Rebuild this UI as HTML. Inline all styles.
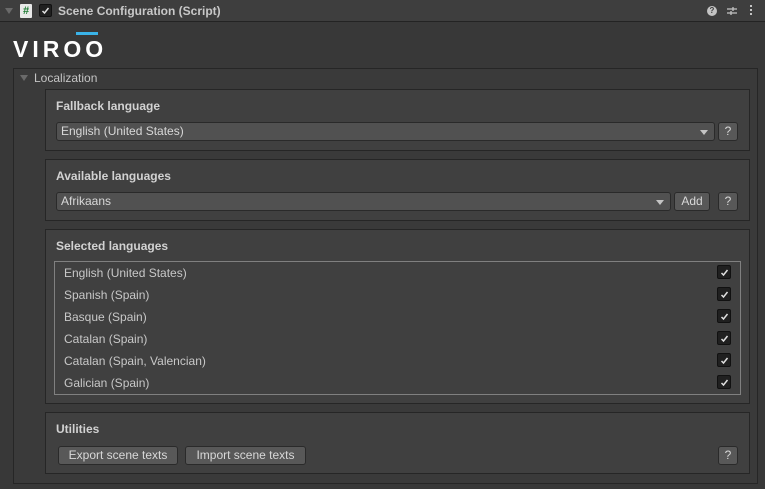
<!DOCTYPE html><html><head><style>
*{box-sizing:border-box;margin:0;padding:0}
body{width:765px;height:489px;background:#383838;font-family:"Liberation Sans",sans-serif;font-size:12px;color:#c4c4c4;position:relative;overflow:hidden}
.a{position:absolute}
.box{position:absolute;left:45px;width:705px;background:#404040;border:1px solid #262626}
.t{position:absolute;left:10px;font-weight:bold;font-size:12px;color:#d2d2d2}
.dd{position:absolute;background:#515151;border:1px solid #2a2a2a;border-radius:3px;height:19px;padding-left:4px;line-height:17px;color:#d8d8d8}
.dd:after{content:"";position:absolute;right:6px;top:7px;border-left:4px solid transparent;border-right:4px solid transparent;border-top:5px solid #c4c4c4}
.btn{position:absolute;background:#585858;border:1px solid #2a2a2a;border-radius:3px;height:19px;line-height:17px;text-align:center;color:#d8d8d8}
.row{position:absolute;left:9px;color:#c8c8c8}
.cb{position:absolute;left:662px;width:14px;height:14px;background:#202020;border:1px solid #111;border-radius:2px}
.cb svg{position:absolute;left:1px;top:1px}
</style></head><body>
<div class="a" style="left:0;top:0;width:765px;height:22px;background:#3e3e3e;border-bottom:1px solid #232323"></div>
<div class="a" style="left:5px;top:8px;border-left:4px solid transparent;border-right:4px solid transparent;border-top:6px solid #6a6a6a"></div>
<div class="a" style="left:20px;top:4px;width:12px;height:14px;background:#e8e8e8;border-radius:1px;color:#1b7a30;font-weight:bold;font-size:11px;text-align:center;line-height:14px">#</div>
<div class="a" style="left:39px;top:4px;width:13px;height:13px;background:#202020;border:1px solid #111;border-radius:2px"><svg width="11" height="11" style="position:absolute;left:0;top:0"><path d="M2.5 6 L4.5 8 L8.5 3" stroke="#e0e0e0" stroke-width="1.5" fill="none"/></svg></div>
<div class="a" style="left:58px;top:4px;font-weight:bold;color:#c8c8c8">Scene Configuration (Script)</div>
<div class="a" style="left:707px;top:6px;width:10px;height:10px;border-radius:50%;background:#c4c4c4;color:#3e3e3e;font-size:8px;font-weight:bold;text-align:center;line-height:10px">?</div>
<svg class="a" style="left:726px;top:5px" width="12" height="12"><path d="M1 4H11M1 8H11M7 2V6M5 6V10" stroke="#c4c4c4" stroke-width="1.3"/></svg>
<div class="a" style="left:750px;top:5px;width:2px;height:2px;background:#c4c4c4;box-shadow:0 4px #c4c4c4,0 8px #c4c4c4"></div>
<div class="a" style="left:76px;top:32px;width:22px;height:3px;background:#3ab3e8"></div>
<div class="a" style="left:13px;top:37px;font-size:23px;font-weight:bold;color:#fff;letter-spacing:4px;line-height:24px">VIROO</div>
<div class="a" style="left:13px;top:68px;width:745px;height:416px;background:#3a3a3a;border:1px solid #262626"></div>
<div class="a" style="left:20px;top:75px;border-left:4px solid transparent;border-right:4px solid transparent;border-top:6px solid #6a6a6a"></div>
<div class="a" style="left:34px;top:71px;color:#c4c4c4">Localization</div>
<div class="box" style="top:89px;height:62px"><div class="t" style="top:9px">Fallback language</div>
<div class="dd" style="left:10px;top:32px;width:659px">English (United States)</div>
<div class="btn" style="left:672px;top:32px;width:20px">?</div></div>
<div class="box" style="top:159px;height:62px"><div class="t" style="top:9px">Available languages</div>
<div class="dd" style="left:10px;top:32px;width:615px">Afrikaans</div>
<div class="btn" style="left:628px;top:32px;width:36px">Add</div>
<div class="btn" style="left:672px;top:32px;width:20px">?</div></div>
<div class="box" style="top:229px;height:175px"><div class="t" style="top:9px">Selected languages</div>
<div class="a" style="left:8px;top:31px;width:687px;height:134px;border:1px solid #808080">
<div class="row" style="top:4px">English (United States)</div>
<div class="row" style="top:26px">Spanish (Spain)</div>
<div class="row" style="top:48px">Basque (Spain)</div>
<div class="row" style="top:70px">Catalan (Spain)</div>
<div class="row" style="top:92px">Catalan (Spain, Valencian)</div>
<div class="row" style="top:114px">Galician (Spain)</div>
<div class="cb" style="top:3px"><svg width="11" height="11"><path d="M2.5 6 L4.5 8 L8.5 3" stroke="#e0e0e0" stroke-width="1.5" fill="none"/></svg></div>
<div class="cb" style="top:25px"><svg width="11" height="11"><path d="M2.5 6 L4.5 8 L8.5 3" stroke="#e0e0e0" stroke-width="1.5" fill="none"/></svg></div>
<div class="cb" style="top:47px"><svg width="11" height="11"><path d="M2.5 6 L4.5 8 L8.5 3" stroke="#e0e0e0" stroke-width="1.5" fill="none"/></svg></div>
<div class="cb" style="top:69px"><svg width="11" height="11"><path d="M2.5 6 L4.5 8 L8.5 3" stroke="#e0e0e0" stroke-width="1.5" fill="none"/></svg></div>
<div class="cb" style="top:91px"><svg width="11" height="11"><path d="M2.5 6 L4.5 8 L8.5 3" stroke="#e0e0e0" stroke-width="1.5" fill="none"/></svg></div>
<div class="cb" style="top:113px"><svg width="11" height="11"><path d="M2.5 6 L4.5 8 L8.5 3" stroke="#e0e0e0" stroke-width="1.5" fill="none"/></svg></div>
</div></div>
<div class="box" style="top:412px;height:62px"><div class="t" style="top:9px">Utilities</div>
<div class="btn" style="left:12px;top:33px;width:120px">Export scene texts</div>
<div class="btn" style="left:139px;top:33px;width:121px">Import scene texts</div>
<div class="btn" style="left:672px;top:33px;width:20px">?</div></div>
</body></html>
